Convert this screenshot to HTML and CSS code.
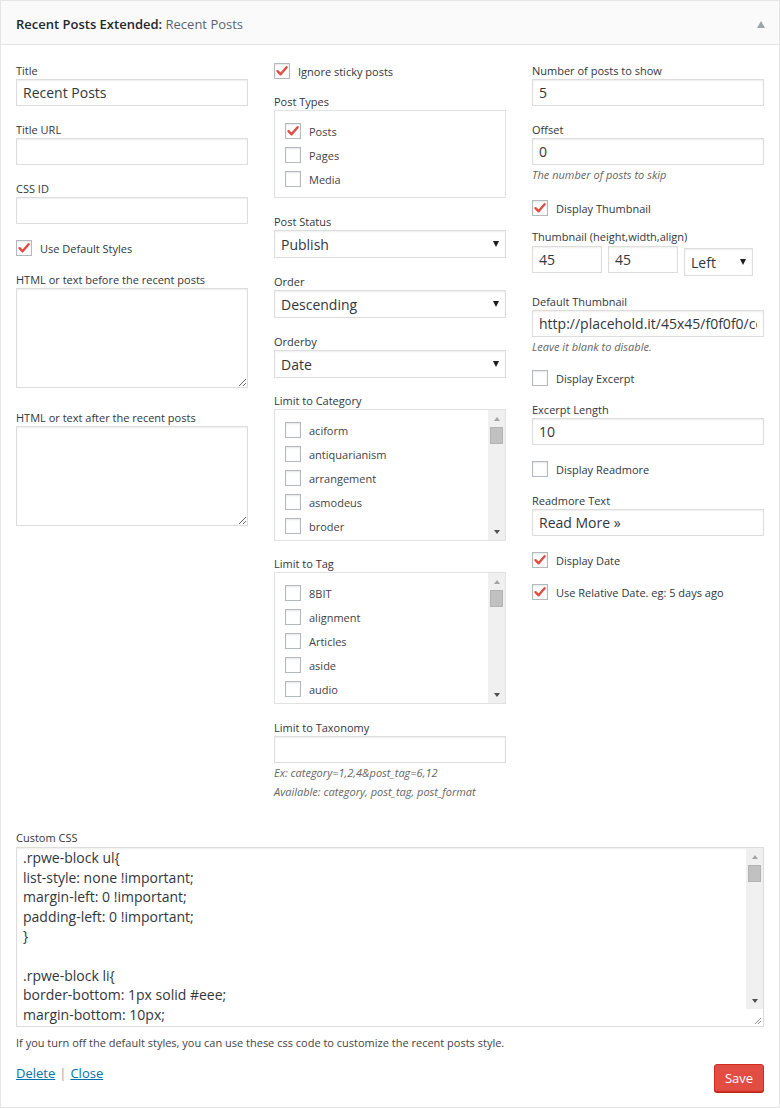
FILE: index.html
```
<!DOCTYPE html>
<html lang="en">
<head>
<meta charset="utf-8">
<title>Recent Posts Extended</title>
<link rel="stylesheet" href="styles.css">
</head>
<body>
<div class="widget">
  <div class="widget-top">
    <h3 class="widget-title">Recent Posts Extended: <span class="in-title">Recent Posts</span></h3>
    <span class="toggle"></span>
  </div>
  <div class="widget-inside">
    <div class="cols">
      <!-- column 1 -->
      <div class="col">
        <div class="field"><label class="lbl">Title</label><input class="inp" type="text" value="Recent Posts"></div>
        <div class="field"><label class="lbl">Title URL</label><input class="inp" type="text"></div>
        <div class="field"><label class="lbl">CSS ID</label><input class="inp" type="text"></div>
        <div class="check"><span class="cb"><svg viewBox="0 0 16 16" width="16" height="16"><path d="M3.5 8.2 L6.6 11.3 L12.6 4.2" fill="none" stroke="#e14d43" stroke-width="2.4" stroke-linecap="round" stroke-linejoin="round"/></svg></span>Use Default Styles</div>
        <div class="field mb22"><label class="lbl">HTML or text before the recent posts</label><textarea class="ta"></textarea></div>
        <div class="field"><label class="lbl">HTML or text after the recent posts</label><textarea class="ta"></textarea></div>
      </div>

      <!-- column 2 -->
      <div class="col">
        <div class="check mb15"><span class="cb"><svg viewBox="0 0 16 16" width="16" height="16"><path d="M3.5 8.2 L6.6 11.3 L12.6 4.2" fill="none" stroke="#e14d43" stroke-width="2.4" stroke-linecap="round" stroke-linejoin="round"/></svg></span>Ignore sticky posts</div>
        <div class="field">
          <label class="lbl">Post Types</label>
          <div class="boxlist">
            <div class="item"><span class="cb"><svg viewBox="0 0 16 16" width="16" height="16"><path d="M3.5 8.2 L6.6 11.3 L12.6 4.2" fill="none" stroke="#e14d43" stroke-width="2.4" stroke-linecap="round" stroke-linejoin="round"/></svg></span>Posts</div>
            <div class="item"><span class="cb"></span>Pages</div>
            <div class="item"><span class="cb"></span>Media</div>
          </div>
        </div>
        <div class="field"><label class="lbl">Post Status</label><div class="sel"><select><option>Publish</option></select></div></div>
        <div class="field"><label class="lbl">Order</label><div class="sel"><select><option>Descending</option></select></div></div>
        <div class="field mb15"><label class="lbl">Orderby</label><div class="sel"><select><option>Date</option></select></div></div>
        <div class="field mb15">
          <label class="lbl">Limit to Category</label>
          <div class="scrollbox">
            <div class="items">
              <div class="item"><span class="cb"></span>aciform</div>
              <div class="item"><span class="cb"></span>antiquarianism</div>
              <div class="item"><span class="cb"></span>arrangement</div>
              <div class="item"><span class="cb"></span>asmodeus</div>
              <div class="item"><span class="cb"></span>broder</div>
            </div>
            <div class="vbar">
              <div class="vbtn"><span class="arr-up"></span></div>
              <div class="thumb"></div>
              <div class="spacer"></div>
              <div class="vbtn"><span class="arr-down"></span></div>
            </div>
          </div>
        </div>
        <div class="field">
          <label class="lbl">Limit to Tag</label>
          <div class="scrollbox">
            <div class="items">
              <div class="item"><span class="cb"></span>8BIT</div>
              <div class="item"><span class="cb"></span>alignment</div>
              <div class="item"><span class="cb"></span>Articles</div>
              <div class="item"><span class="cb"></span>aside</div>
              <div class="item"><span class="cb"></span>audio</div>
            </div>
            <div class="vbar">
              <div class="vbtn"><span class="arr-up"></span></div>
              <div class="thumb"></div>
              <div class="spacer"></div>
              <div class="vbtn"><span class="arr-down"></span></div>
            </div>
          </div>
        </div>
        <div class="field mb0">
          <label class="lbl">Limit to Taxonomy</label>
          <input class="inp" type="text">
          <p class="desc">Ex: category=1,2,4&amp;post_tag=6,12</p>
          <p class="desc desc2">Available: category, post_tag, post_format</p>
        </div>
      </div>

      <!-- column 3 -->
      <div class="col">
        <div class="field"><label class="lbl">Number of posts to show</label><input class="inp" type="text" value="5"></div>
        <div class="field mb17"><label class="lbl">Offset</label><input class="inp" type="text" value="0"><p class="desc">The number of posts to skip</p></div>
        <div class="check mb13"><span class="cb"><svg viewBox="0 0 16 16" width="16" height="16"><path d="M3.5 8.2 L6.6 11.3 L12.6 4.2" fill="none" stroke="#e14d43" stroke-width="2.4" stroke-linecap="round" stroke-linejoin="round"/></svg></span>Display Thumbnail</div>
        <div class="field mb18">
          <label class="lbl lbl-gap">Thumbnail (height,width,align)</label>
          <div class="thumbrow">
            <input class="inp small" type="text" value="45">
            <input class="inp small" type="text" value="45">
            <div class="sel sel-small"><select><option>Left</option></select></div>
          </div>
        </div>
        <div class="field mb15"><label class="lbl">Default Thumbnail</label><input class="inp" type="text" value="http://placehold.it/45x45/f0f0f0/ccc"><p class="desc">Leave it blank to disable.</p></div>
        <div class="check"><span class="cb"></span>Display Excerpt</div>
        <div class="field"><label class="lbl">Excerpt Length</label><input class="inp" type="text" value="10"></div>
        <div class="check"><span class="cb"></span>Display Readmore</div>
        <div class="field"><label class="lbl">Readmore Text</label><input class="inp" type="text" value="Read More »"></div>
        <div class="check"><span class="cb"><svg viewBox="0 0 16 16" width="16" height="16"><path d="M3.5 8.2 L6.6 11.3 L12.6 4.2" fill="none" stroke="#e14d43" stroke-width="2.4" stroke-linecap="round" stroke-linejoin="round"/></svg></span>Display Date</div>
        <div class="check mb0"><span class="cb"><svg viewBox="0 0 16 16" width="16" height="16"><path d="M3.5 8.2 L6.6 11.3 L12.6 4.2" fill="none" stroke="#e14d43" stroke-width="2.4" stroke-linecap="round" stroke-linejoin="round"/></svg></span>Use Relative Date. eg: 5 days ago</div>
      </div>
    </div>

    <div class="custom">
      <label class="lbl lbl-gap">Custom CSS</label>
      <div class="codebox">
        <textarea class="code" spellcheck="false">.rpwe-block ul{
list-style: none !important;
margin-left: 0 !important;
padding-left: 0 !important;
}

.rpwe-block li{
border-bottom: 1px solid #eee;
margin-bottom: 10px;
padding-bottom: 10px;
list-style-type: none;
}</textarea>
        <div class="vcol">
          <div class="vbar vbar-tall">
            <div class="vbtn"><span class="arr-up"></span></div>
            <div class="thumb"></div>
            <div class="spacer"></div>
            <div class="vbtn"><span class="arr-down"></span></div>
          </div>
          <div class="grip"><svg viewBox="0 0 17 17" width="17" height="17"><path d="M15 9 L9 15 M15 12 L12 15" stroke="#888" stroke-width="1" fill="none"/></svg></div>
        </div>
      </div>
      <p class="note">If you turn off the default styles, you can use these css code to customize the recent posts style.</p>
    </div>

    <div class="footer">
      <div class="links"><a href="#">Delete</a><span class="sep">|</span><a href="#">Close</a></div>
      <button class="save" type="button">Save</button>
    </div>
  </div>
</div>
</body>
</html>
```
FILE: styles.css
```
* { box-sizing: border-box; }

body {
  margin: 0;
  background: #fff;
  font-family: "Open Sans", "Liberation Sans", sans-serif;
  color: #32373c;
}

.widget {
  width: 780px;
  height: 1108px;
  border: 1px solid #e5e5e5;
  background: #fff;
}

.widget-top {
  height: 44px;
  background: #fafafa;
  border-bottom: 1px solid #e5e5e5;
  display: flex;
  align-items: center;
  justify-content: space-between;
  padding: 3px 14px 0 15px;
}

.widget-title {
  margin: 0;
  font-size: 13px;
  font-weight: 600;
  color: #23282d;
  line-height: 18px;
}

.in-title {
  font-weight: 400;
  color: #5c636b;
}

.toggle {
  width: 0;
  height: 0;
  border-left: 4px solid transparent;
  border-right: 4px solid transparent;
  border-bottom: 7px solid #a0a5aa;
}

.widget-inside {
  padding: 18px 15px 15px;
}

.cols {
  display: grid;
  grid-template-columns: repeat(3, 232px);
  column-gap: 26px;
  align-items: start;
}

.field { margin-bottom: 16px; }

.lbl {
  display: block;
  font-size: 11px;
  line-height: 16px;
  color: #32373c;
}
.lbl-gap { margin-bottom: 1px; }

.inp {
  display: block;
  width: 100%;
  height: 27px;
  margin: 0;
  padding: 0 6px;
  border: 1px solid #ddd;
  background: #fff;
  box-shadow: inset 0 1px 2px rgba(0, 0, 0, 0.07);
  font-family: "Open Sans", sans-serif;
  font-size: 14px;
  color: #32373c;
  outline: none;
}

.ta {
  display: block;
  width: 100%;
  height: 100px;
  margin: 0;
  border: 1px solid #ddd;
  box-shadow: inset 0 1px 2px rgba(0, 0, 0, 0.07);
  font-family: "Open Sans", sans-serif;
  font-size: 14px;
  resize: vertical;
  outline: none;
}

.desc {
  margin: 2px 0 0;
  font-size: 11px;
  line-height: 16px;
  font-style: italic;
  color: #666;
}
.desc2 { margin-top: 3px; }

.check {
  display: flex;
  align-items: center;
  gap: 8px;
  height: 16px;
  font-size: 11px;
  color: #32373c;
  margin-bottom: 16px;
}

.cb {
  flex: none;
  width: 16px;
  height: 16px;
  border: 1px solid #b4b9be;
  background: #fff;
  box-shadow: inset 0 1px 2px rgba(0, 0, 0, 0.1);
  display: flex;
  align-items: center;
  justify-content: center;
  overflow: hidden;
}
.cb svg { flex: none; }

.item {
  display: flex;
  align-items: center;
  gap: 8px;
  height: 16px;
  font-size: 11px;
  color: #444;
  margin-bottom: 8px;
}

.boxlist {
  border: 1px solid #e2e2e2;
  padding: 12px 10px 10px;
}
.boxlist .item:last-child { margin-bottom: 0; }

.sel {
  position: relative;
  height: 28px;
}
.sel select {
  appearance: none;
  -webkit-appearance: none;
  display: block;
  width: 100%;
  height: 28px;
  margin: 0;
  padding: 0 6px;
  border: 1px solid #ddd;
  border-radius: 0;
  background: #fff;
  box-shadow: inset 0 1px 2px rgba(0, 0, 0, 0.07);
  font-family: "Open Sans", sans-serif;
  font-size: 14px;
  color: #32373c;
  outline: none;
}
.sel::after {
  content: "";
  position: absolute;
  right: 7px;
  top: 11px;
  border-left: 3.5px solid transparent;
  border-right: 3.5px solid transparent;
  border-top: 6px solid #1e1e1e;
  pointer-events: none;
}

.thumbrow {
  display: flex;
  gap: 6px;
  align-items: flex-start;
  height: 30px;
}
.inp.small { width: 70px; flex: none; }
.sel-small { width: 69px; flex: none; margin-top: 2px; }

.scrollbox {
  display: flex;
  height: 132px;
  border: 1px solid #e2e2e2;
}
.scrollbox .items {
  flex: 1;
  padding: 12px 10px 0;
  overflow: hidden;
}

.vbar {
  flex: none;
  width: 17px;
  background: #f0f0f0;
  display: flex;
  flex-direction: column;
  align-items: center;
}
.vbtn {
  width: 17px;
  height: 17px;
  display: flex;
  align-items: center;
  justify-content: center;
}
.arr-up {
  width: 0;
  height: 0;
  border-left: 3.5px solid transparent;
  border-right: 3.5px solid transparent;
  border-bottom: 4px solid #a3a3a3;
}
.arr-down {
  width: 0;
  height: 0;
  border-left: 3.5px solid transparent;
  border-right: 3.5px solid transparent;
  border-top: 4px solid #505050;
}
.thumb {
  width: 13px;
  height: 17px;
  background: #c1c1c1;
  border: 1px solid #b3b3b3;
}
.spacer { flex: 1; }

.custom { margin-top: 30px; }

.codebox {
  display: flex;
  height: 180px;
  border: 1px solid #ddd;
  box-shadow: inset 0 1px 2px rgba(0, 0, 0, 0.07);
}
.code {
  flex: 1;
  height: 100%;
  margin: 0;
  border: 0;
  padding: 0 6px;
  resize: none;
  overflow: hidden;
  background: transparent;
  font-family: "Open Sans", sans-serif;
  font-size: 14px;
  line-height: 19.6px;
  color: #32373c;
  outline: none;
}
.vcol {
  flex: none;
  width: 17px;
  display: flex;
  flex-direction: column;
}
.vbar-tall { flex: 1; }
.grip {
  width: 17px;
  height: 17px;
  background: #fff;
}
.grip svg { display: block; }

.note {
  margin: 8px 0 0;
  font-size: 11px;
  line-height: 16px;
  color: #444;
}

.footer {
  margin-top: 13px;
  display: flex;
  justify-content: space-between;
  align-items: flex-start;
}
.links {
  font-size: 13px;
  line-height: 18px;
}
.links a {
  color: #0073aa;
  text-decoration: underline;
}
.sep {
  color: #a0a5aa;
  margin: 0 4px;
}

.save {
  width: 50px;
  height: 28px;
  margin: 0;
  padding: 0;
  border: 1px solid #d02c21;
  border-radius: 3px;
  background: #e14d43;
  box-shadow: 0 1px 0 #ba281e;
  color: #fff;
  font-family: "Open Sans", sans-serif;
  font-size: 13px;
  line-height: 26px;
  cursor: pointer;
}

/* spacing modifiers (after the component rules so they take precedence) */
.field.mb0, .check.mb0 { margin-bottom: 0; }
.check.mb13 { margin-bottom: 13px; }
.field.mb15, .check.mb15 { margin-bottom: 15px; }
.field.mb17 { margin-bottom: 17px; }
.field.mb18 { margin-bottom: 18px; }
.field.mb22 { margin-bottom: 22px; }
```
